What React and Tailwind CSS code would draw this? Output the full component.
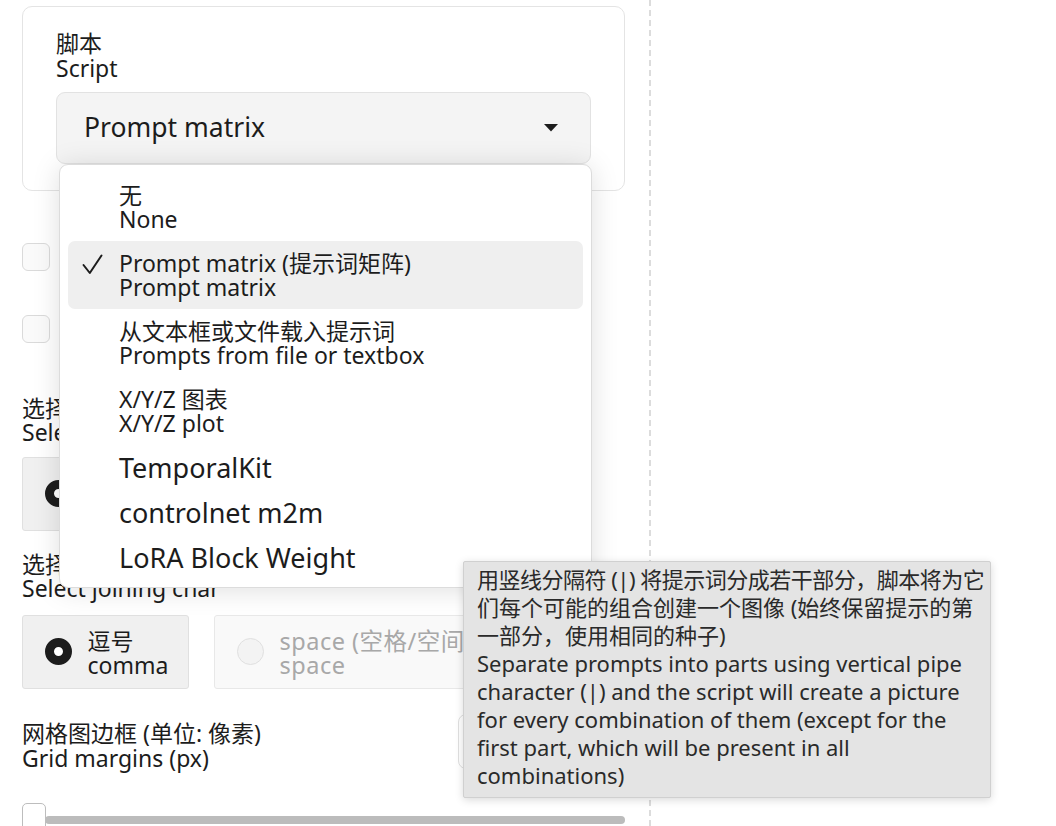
export default function App() {
  const twoLine = "text-[23px] leading-[24.5px]";
  return (
    <div className="relative flex h-[826px] w-[1056px] overflow-hidden bg-white font-['Noto_Sans','Noto_Sans_CJK_SC',sans-serif] text-[#1c1c1c]">
      <div className="w-[649px] shrink-0 pl-[22px] pr-[24px]">
        <div className="-mt-[27px] h-[24px] whitespace-nowrap text-[23px] leading-[24px] text-[#333]">
          Settings for every listing
        </div>

        {/* Script card */}
        <div className="mt-[9px] rounded-[10px] border-[1.5px] border-[#e4e4e4] px-[33px] pb-[26px] pt-[24px]">
          <div className={twoLine}>
            脚本
            <br />
            Script
          </div>
          <div className="relative mt-[12px]">
            <div className="flex h-[72px] items-center justify-between rounded-[9px] border-[1.5px] border-[#e2e2e2] bg-[#f4f4f4] pl-[27px] pr-[32px] text-[26.5px]">
              <span>Prompt matrix</span>
              <svg width="14" height="8" viewBox="0 0 14 8">
                <polygon points="0,0 14,0 7,7.5" fill="#1c1c1c" />
              </svg>
            </div>

            {/* dropdown menu */}
            <div className="absolute left-[3px] top-full z-10 w-[533px] rounded-[9px] border border-[#dcdcdc] bg-white px-[8px] pb-[7px] pt-[8px] shadow-[0_2px_28px_rgba(0,0,0,0.13)]">
              <div className={`flex h-[68px] items-center rounded-[7px] pl-[51px] ${twoLine}`}>
                <div>
                  无
                  <br />
                  None
                </div>
              </div>
              <div className={`relative flex h-[68px] items-center rounded-[7px] bg-[#efefef] pl-[51px] ${twoLine}`}>
                <svg className="absolute left-[14px] top-[13px]" width="21" height="21" viewBox="0 0 21 21">
                  <path d="M1.5 11 L7.8 19 L19.5 1.5" fill="none" stroke="#1c1c1c" strokeWidth="2" strokeLinecap="round" strokeLinejoin="round" />
                </svg>
                <div>
                  Prompt matrix (提示词矩阵)
                  <br />
                  Prompt matrix
                </div>
              </div>
              <div className={`flex h-[68px] items-center rounded-[7px] pl-[51px] ${twoLine}`}>
                <div>
                  从文本框或文件载入提示词
                  <br />
                  Prompts from file or textbox
                </div>
              </div>
              <div className={`flex h-[68px] items-center rounded-[7px] pl-[51px] ${twoLine}`}>
                <div>
                  X/Y/Z 图表
                  <br />
                  X/Y/Z plot
                </div>
              </div>
              <div className="flex h-[45px] items-center pl-[51px] text-[27px] leading-[30px]">TemporalKit</div>
              <div className="flex h-[45px] items-center pl-[51px] text-[27px] leading-[30px]">controlnet m2m</div>
              <div className="flex h-[45px] items-center pl-[51px] text-[27px] leading-[30px]">LoRA Block Weight</div>
            </div>
          </div>
        </div>

        {/* checkboxes */}
        <div className="mt-[52px] flex h-[28px] items-center gap-[14px]">
          <div className="h-[28px] w-[28px] rounded-[6px] border-[1.5px] border-[#dadada] bg-[#fafafa]" />
          <span className={twoLine}>把可变部分放在提示词文本的开头</span>
        </div>
        <div className="mt-[44px] flex h-[28px] items-center gap-[14px]">
          <div className="h-[28px] w-[28px] rounded-[6px] border-[1.5px] border-[#dadada] bg-[#fafafa]" />
          <span className={twoLine}>为每张图片使用不同的随机种子</span>
        </div>

        {/* select prompt */}
        <div className={`mt-[52.5px] ${twoLine}`}>
          选择提示词
          <br />
          Select prompt
        </div>
        <div className="mt-[12px] flex gap-[25px]">
          <div className="flex h-[74px] items-center rounded-[3px] border-[1.5px] border-[#e0e0e0] bg-[#f0f0f0] pl-[21.5px] pr-[22px]">
            <div className="h-[27px] w-[27px] rounded-full border-[9px] border-[#1c1c1c] bg-white" />
            <div className={`ml-[16px] ${twoLine}`}>
              正向
              <br />
              positive
            </div>
          </div>
          <div className="flex h-[74px] items-center rounded-[3px] border-[1.5px] border-[#e8e8e8] bg-[#f9f9f9] pl-[21.5px] pr-[22px] text-[#a8a8a8]">
            <div className="h-[27px] w-[27px] rounded-full border-[1.5px] border-[#e0e0e0] bg-[#f3f3f3]" />
            <div className={`ml-[16px] ${twoLine}`}>
              反向
              <br />
              negative
            </div>
          </div>
        </div>

        {/* joining char */}
        <div className={`mt-[21px] ${twoLine}`}>
          选择连接符
          <br />
          Select joining char
        </div>
        <div className="mt-[14px] flex gap-[25px]">
          <div className="flex h-[74px] w-[167px] items-center rounded-[3px] border-[1.5px] border-[#e0e0e0] bg-[#f0f0f0] pl-[21.5px]">
            <div className="h-[27px] w-[27px] rounded-full border-[9px] border-[#1c1c1c] bg-white" />
            <div className={`ml-[16px] pt-[3px] ${twoLine}`}>
              逗号
              <br />
              comma
            </div>
          </div>
          <div className="flex h-[74px] items-center rounded-[3px] border-[1.5px] border-[#e8e8e8] bg-[#f9f9f9] pl-[21.5px] pr-[22px] text-[#a8a8a8]">
            <div className="h-[27px] w-[27px] rounded-full border-[1.5px] border-[#e0e0e0] bg-[#f3f3f3]" />
            <div className="ml-[16px] whitespace-nowrap pt-[3px] text-[23.5px] leading-[24.5px] tracking-[0.5px]">
              space (空格/空间)
              <br />
              space
            </div>
          </div>
        </div>

        {/* grid margins */}
        <div className="mt-[25px] flex items-start justify-between">
          <div className={`mt-[7.5px] ${twoLine}`}>
            网格图边框 (单位: 像素)
            <br />
            Grid margins (px)
          </div>
          <div className="flex h-[55px] w-[167px] items-center rounded-[8px] border-[1.5px] border-[#e0e0e0] bg-white px-[14px] text-[23px]">
            0
          </div>
        </div>
        <div className="mt-[33px] flex items-center">
          <div className="relative z-[1] h-[34px] w-[24px] rounded-[5px] border-[1.5px] border-[#bdbdbd] bg-white" />
          <div className="-ml-[1px] h-[8px] flex-1 rounded-full bg-[#bcbcbc]" />
        </div>
      </div>

      <div className="flex-1 border-l-2 border-dashed border-[#dcdcdc]" />

      {/* tooltip */}
      <div className="absolute left-[463px] top-[561px] z-20 h-[237px] w-[528px] rounded-[2px] border border-[#d0d0d0] bg-[#e4e4e4] px-[13px] pt-[3px] text-[22px] leading-[28px] text-[#2a2a2a] shadow-[0_2px_8px_rgba(0,0,0,0.15)]">
        <div className="whitespace-nowrap tracking-[-0.5px]">用竖线分隔符 (|) 将提示词分成若干部分，脚本将为它</div>
        <div className="whitespace-nowrap">们每个可能的组合创建一个图像 (始终保留提示的第</div>
        <div className="whitespace-nowrap">一部分，使用相同的种子)</div>
        <div className="whitespace-nowrap">Separate prompts into parts using vertical pipe</div>
        <div className="whitespace-nowrap">character (|) and the script will create a picture</div>
        <div className="whitespace-nowrap">for every combination of them (except for the</div>
        <div className="whitespace-nowrap">first part, which will be present in all</div>
        <div className="whitespace-nowrap">combinations)</div>
      </div>
    </div>
  );
}
